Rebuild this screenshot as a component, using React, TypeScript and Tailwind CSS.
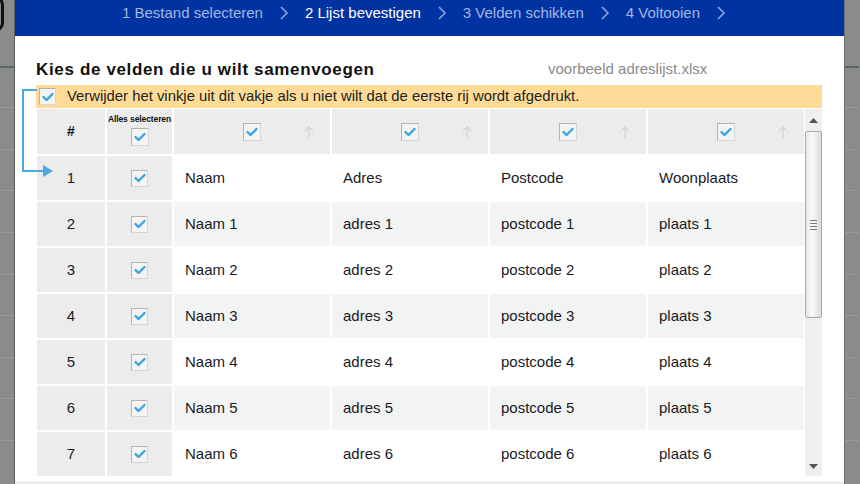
import React from 'react';

const steps = [
  { label: '1 Bestand selecteren', active: false },
  { label: '2 Lijst bevestigen', active: true },
  { label: '3 Velden schikken', active: false },
  { label: '4 Voltooien', active: false },
];

const rows = [
  ['Naam', 'Adres', 'Postcode', 'Woonplaats'],
  ['Naam 1', 'adres 1', 'postcode 1', 'plaats 1'],
  ['Naam 2', 'adres 2', 'postcode 2', 'plaats 2'],
  ['Naam 3', 'adres 3', 'postcode 3', 'plaats 3'],
  ['Naam 4', 'adres 4', 'postcode 4', 'plaats 4'],
  ['Naam 5', 'adres 5', 'postcode 5', 'plaats 5'],
  ['Naam 6', 'adres 6', 'postcode 6', 'plaats 6'],
];

const Check: React.FC<{ size?: string }> = ({ size = 'w-[18px] h-[18px]' }) => (
  <span className={`${size} flex items-center justify-center border border-[#b4b4b4] border-r-[#d6d6d6] border-b-[#d6d6d6] bg-[#f4f4f4]`}>
    <svg width="12" height="10" viewBox="0 0 12 10">
      <path d="M1.5 5 L4.5 8 L10.5 2" fill="none" stroke="#39a3e4" strokeWidth="2.4" strokeLinecap="round" strokeLinejoin="round" />
    </svg>
  </span>
);

const Chevron = () => (
  <svg width="10" height="16" viewBox="0 0 10 16" className="mx-[16px]">
    <path d="M2 2 L8 8 L2 14" fill="none" stroke="#8da3d8" strokeWidth="1.6" />
  </svg>
);

const UpArrow = () => (
  <svg width="10" height="14" viewBox="0 0 10 14">
    <path d="M5 13 V2 M1 6 L5 2 L9 6" fill="none" stroke="#d2d2d2" strokeWidth="1.2" />
  </svg>
);

const SideStrip: React.FC<{ right?: boolean }> = ({ right }) => (
  <div className={`flex flex-col w-[15px] h-full bg-[#8b8b8b] ${right ? 'border-l border-[#6f6f6f]' : 'border-r border-[#5f5f5f]'}`}>
    <div className="h-[68px] border-b-2 border-[#56666a] relative">
      {!right && <div className="absolute left-[-14px] top-[-4px] w-[18px] h-[36px] rounded-full border-[3px] border-[#111]" />}
    </div>
    {[40, 42, 41, 42, 42, 41, 42, 41, 42].map((h, i) => (
      <div key={i} style={{ height: h }} className="border-b border-[#9a9a9a]" />
    ))}
  </div>
);

const App: React.FC = () => {
  return (
    <div className="w-[860px] h-[484px] overflow-hidden flex bg-[#8b8b8b] font-['Liberation_Sans',Arial,sans-serif]">
      <SideStrip />
      <div className="relative w-[829px] h-full bg-white flex flex-col">
        <div className="h-[36px] bg-[#0033a1] flex items-center pl-[107px] pb-[10px] text-[15px]">
          {steps.map((s) => (
            <React.Fragment key={s.label}>
              <span className={s.active ? 'text-white' : 'text-[#a3b5e2]'}>{s.label}</span>
              <Chevron />
            </React.Fragment>
          ))}
        </div>

        <div className="pl-[21px] pr-[22px] pt-[23px] flex flex-col">
          <div className="flex items-center h-[20px]">
            <h1 className="w-[512px] text-[17px] font-bold text-[#111] tracking-[0.65px] pt-[2px]">Kies de velden die u wilt samenvoegen</h1>
            <span className="text-[15px] text-[#8a8a8a]">voorbeeld adreslijst.xlsx</span>
          </div>

          <div className="mt-[6px] h-[23px] bg-[#fedc98] flex items-center pl-[3px] text-[14.85px] text-[#222]">
            <Check size="w-[17px] h-[17px]" />
            <span className="ml-[11px]">Verwijder het vinkje uit dit vakje als u niet wilt dat de eerste rij wordt afgedrukt.</span>
          </div>

          <div className="mt-px flex h-[367px] pl-px">
            <div className="grid grid-cols-[68px_65px_156px_156px_156px_156px] grid-rows-[45px_repeat(7,44px)] gap-[2px] text-[15px] text-[#1a1a24]">
              <div className="bg-[#ececec] flex items-center justify-center font-bold text-[14px]">#</div>
              <div className="bg-[#ececec] flex flex-col items-center pt-[6px]">
                <span className="text-[8.5px] font-bold leading-[9px] text-[#111] whitespace-nowrap tracking-[-0.1px]">Alles selecteren</span>
                <span className="mt-[4px]"><Check /></span>
              </div>
              {[0, 1, 2, 3].map((i) => (
                <div key={i} className="bg-[#ececec] flex items-center pl-[69px] pr-[16px] justify-between">
                  <Check />
                  <UpArrow />
                </div>
              ))}
              {rows.map((r, ri) => (
                <React.Fragment key={ri}>
                  <div className="bg-[#ececec] flex items-center justify-center">{ri + 1}</div>
                  <div className="bg-[#ececec] flex items-center justify-center">
                    <Check size="w-[17px] h-[17px]" />
                  </div>
                  {r.map((c, ci) => (
                    <div key={ci} className={`${ri % 2 === 1 ? 'bg-[#f2f3f3]' : 'bg-white'} flex items-center pl-[11px]`}>
                      {c}
                    </div>
                  ))}
                </React.Fragment>
              ))}
            </div>

            <div className="ml-px w-[18px] h-full bg-[#efefef] flex flex-col items-center">
              <div className="h-[22px] flex items-center justify-center">
                <svg width="9" height="5" viewBox="0 0 9 5"><path d="M0 5 L4.5 0 L9 5 Z" fill="#555" /></svg>
              </div>
              <div className="w-[17px] h-[187px] rounded-[2px] border border-[#a9a9a9] bg-[linear-gradient(to_right,#e6e6e6,#fafafa_40%,#dcdcdc)] flex items-center justify-center">
                <div className="flex flex-col gap-[2px]">
                  <div className="w-[7px] h-px bg-[#777]" />
                  <div className="w-[7px] h-px bg-[#777]" />
                  <div className="w-[7px] h-px bg-[#777]" />
                  <div className="w-[7px] h-px bg-[#777]" />
                </div>
              </div>
              <div className="flex-1" />
              <div className="h-[20px] flex items-center justify-center">
                <svg width="9" height="5" viewBox="0 0 9 5"><path d="M0 0 L4.5 5 L9 0 Z" fill="#555" /></svg>
              </div>
            </div>
          </div>
        </div>

        <div className="mt-[6px] flex-1 bg-[#f0f0f0] border-t border-[#e4e4e4]" />

        <svg className="absolute left-[6px] top-[88px]" width="36" height="92" viewBox="0 0 36 92">
          <path d="M16 2 H2 V83 H24" fill="none" stroke="#4aa8e2" strokeWidth="2" />
          <path d="M22 77 L32 83 L22 89 Z" fill="#4aa8e2" />
        </svg>
      </div>
      <SideStrip right />
    </div>
  );
};

export default App;
